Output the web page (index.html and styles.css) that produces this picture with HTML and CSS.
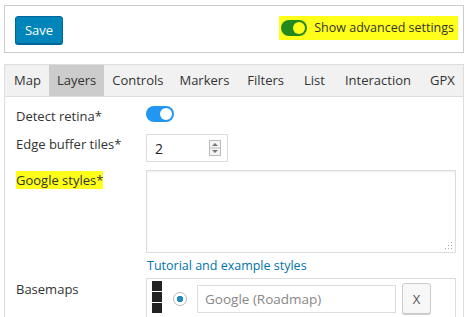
FILE: index.html
```html
<!DOCTYPE html>
<html lang="en">
<head>
    <meta charset="UTF-8">
    <title>Map settings</title>
    <link rel="stylesheet" href="styles.css">
</head>
<body>

    <div class="topbar">
        <button class="btn-save">Save</button>
        <label class="advanced mark">
            <span class="switch green"><span class="knob"></span></span>
            Show advanced settings
        </label>
    </div>

    <div class="panel">
        <ul class="tabs">
            <li>Map</li>
            <li class="active">Layers</li>
            <li>Controls</li>
            <li>Markers</li>
            <li>Filters</li>
            <li>List</li>
            <li>Interaction</li>
            <li>GPX</li>
        </ul>

        <div class="form">
            <div class="label">Detect retina*</div>
            <div class="field"><span class="switch blue"><span class="knob"></span></span></div>

            <div class="label">Edge buffer tiles*</div>
            <div class="field">
                <div class="number">
                    <span>2</span>
                    <span class="spin">
                        <svg width="12" height="16" viewBox="0 0 12 16">
                            <rect x="0.5" y="0.5" width="11" height="15" fill="#f4f4f4" stroke="#bbb"/>
                            <line x1="0.5" y1="8" x2="11.5" y2="8" stroke="#bbb"/>
                            <path d="M3 6 L6 3 L9 6 Z" fill="#777"/>
                            <path d="M3 10 L6 13 L9 10 Z" fill="#777"/>
                        </svg>
                    </span>
                </div>
            </div>

            <div class="label"><span class="mark">Google styles*</span></div>
            <div class="field">
                <div class="textarea">
                    <svg class="grip" width="8" height="8" viewBox="0 0 8 8">
                        <path d="M7 1h1v1H7zM7 4h1v1H7zM4 4h1v1H4zM7 7h1v1H7zM4 7h1v1H4zM1 7h1v1H1z" fill="#aaa"/>
                    </svg>
                </div>
                <a class="link" href="#">Tutorial and example styles</a>
            </div>

            <div class="label basemaps-label">Basemaps</div>
            <div class="field">
                <div class="basemaps">
                    <div class="handle"><i></i><i></i><i></i></div>
                    <span class="radio"></span>
                    <div class="text-input">Google (Roadmap)</div>
                    <button class="btn-x">X</button>
                </div>
            </div>
        </div>
    </div>

</body>
</html>
```

FILE: styles.css
```css
html {
    height: 317px;
    overflow: hidden;
}
body {
    margin: 5px 6px 0 4px;
    font-family: "Open Sans", "Noto Sans", sans-serif;
    font-size: 13px;
    color: #333;
    background: #fff;
}
.topbar {
    display: flex;
    align-items: center;
    justify-content: space-between;
    border: 1px solid #ccc;
    padding: 10px 5px 8px 10px;
}
.btn-save {
    width: 48px;
    height: 28px;
    background: #0085ba;
    border: 1px solid #006799;
    border-radius: 3px;
    color: #fff;
    font-family: inherit;
    font-size: 13px;
    box-shadow: 0 1px 0 #006799;
}
.mark {
    background: #ffff1a;
}
.advanced {
    display: flex;
    align-items: center;
    gap: 7px;
    height: 24px;
    margin-top: -5px;
    padding: 0 4px 0 2px;
    font-size: 12.5px;
    color: #333;
}
.switch {
    display: inline-block;
    position: relative;
    width: 28px;
    height: 16px;
    border-radius: 8px;
}
.switch .knob {
    position: absolute;
    top: 2px;
    right: 2px;
    width: 12px;
    height: 12px;
    border-radius: 50%;
    background: #fff;
}
.switch.green {
    width: 26px;
    background: #23891d;
}
.switch.green .knob {
    background: #ffff1a;
}
.switch.blue {
    background: #2196f3;
}
.panel {
    margin-top: 11px;
    border: 1px solid #ddd;
    border-bottom: none;
}
.tabs {
    display: flex;
    margin: 0;
    padding: 0 0 0 1px;
    list-style: none;
    background: #f1f1f1;
    border-bottom: 1px solid #ddd;
}
.tabs li {
    padding: 7px 8px 8px;
    line-height: 16px;
}
.tabs li.active {
    background: #ccc;
}
.tabs li:nth-child(n+5) {
    padding: 7px 10px 8px;
}
.tabs li:last-child {
    padding-left: 9px;
}
.form {
    display: grid;
    grid-template-columns: 130px 1fr;
    padding: 9px 10px 0 11px;
    row-gap: 8px;
}
.label {
    padding-top: 1px;
}
.number {
    display: flex;
    align-items: center;
    justify-content: space-between;
    width: 66px;
    height: 26px;
    padding: 0 6px 0 8px;
    border: 1px solid #ddd;
    font-size: 14px;
    color: #222;
}
.spin svg {
    display: block;
}
.textarea {
    position: relative;
    height: 81px;
    border: 1px solid #ddd;
    box-shadow: inset 0 1px 2px rgba(0, 0, 0, 0.07);
}
.grip {
    position: absolute;
    right: 3px;
    bottom: 3px;
}
.link {
    display: block;
    margin: 5px 0 -3px 1px;
    line-height: 15px;
    color: #0073aa;
    text-decoration: none;
    font-size: 12.5px;
}
.basemaps-label {
    padding-top: 2px;
}
.basemaps {
    display: flex;
    align-items: center;
    box-sizing: border-box;
    width: 310px;
    height: 40px;
    border: 1px solid #ddd;
    border-bottom: none;
    padding-left: 5px;
}
.handle {
    display: flex;
    flex-direction: column;
    gap: 1px;
    align-self: flex-start;
    margin-top: 2px;
}
.handle i {
    display: block;
    width: 10px;
    height: 10px;
    background: #222;
}
.radio {
    width: 14px;
    height: 14px;
    margin: 0 10px 0 11px;
    border: 1px solid #b4b9be;
    border-radius: 50%;
    box-sizing: border-box;
    background: radial-gradient(circle, #1e8cbe 0 3px, #fff 3.5px);
}
.text-input {
    width: 190px;
    height: 26px;
    padding-left: 7px;
    border: 1px solid #ddd;
    line-height: 26px;
    color: #888;
    font-size: 13.5px;
}
.btn-x {
    width: 29px;
    height: 31px;
    margin-left: 6px;
    background: #f7f7f7;
    border: 1px solid #ccc;
    border-radius: 3px;
    color: #555;
    font-family: inherit;
    font-size: 13px;
    box-shadow: 0 1px 0 #ccc;
}
```
